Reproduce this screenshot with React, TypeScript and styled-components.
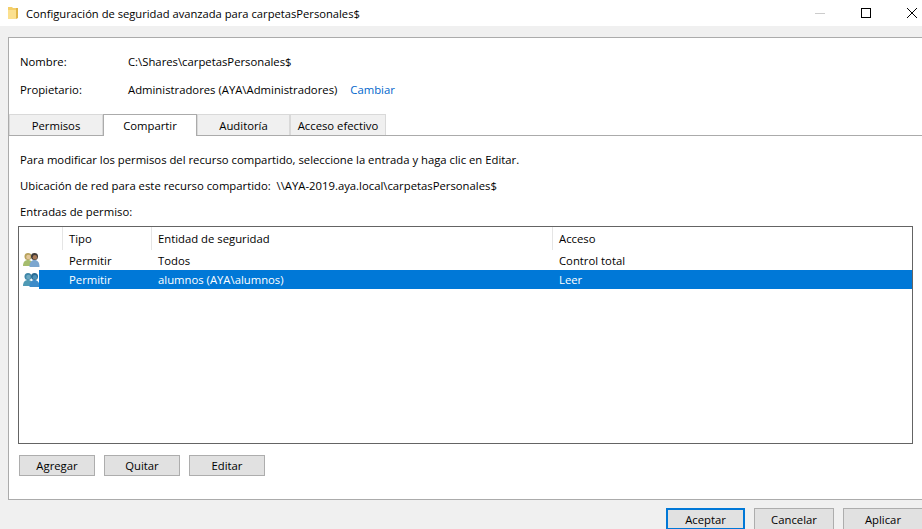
import React from 'react'
import styled, {createGlobalStyle} from 'styled-components'

const GlobalStyle = createGlobalStyle`
  html, body {
    margin: 0;
    padding: 0;
    background: #f0f0f0;
    overflow: hidden;
  }
  body {
    font-family: "Open Sans", "Noto Sans", "Liberation Sans", sans-serif;
    font-size: 11.3px;
    color: #000;
  }
`

const Window = styled.div`
  width: 922px;
  height: 529px;
  display: flex;
  flex-direction: column;
  overflow: hidden;
  background: #f0f0f0;
`

const TitleBar = styled.div`
  height: 26px;
  flex: none;
  display: flex;
  align-items: center;
  background: #fff;
  padding-left: 8px;
  margin-right: -13px;
`

const TitleText = styled.div`
  margin-left: 8px;
  flex: 1;
  font-size: 11.2px;
  white-space: nowrap;
`

const WinControl = styled.div`
  width: 46px;
  height: 26px;
  display: flex;
  align-items: center;
  justify-content: center;
  flex: none;
`

const Panel = styled.div`
  margin: 11px 0 0 8px;
  height: 463px;
  flex: none;
  background: #fff;
  border: 1px solid #ababab;
  border-right: none;
  box-sizing: border-box;
  display: flex;
  flex-direction: column;
`

const InfoBlock = styled.div`
  padding: 9px 0 0 11px;
  height: 76px;
  flex: none;
  box-sizing: border-box;
`

const InfoRow = styled.div`
  height: 28px;
  display: flex;
  align-items: center;
`

const InfoLabel = styled.div`
  width: 108px;
`

const Link = styled.span`
  color: #0066cc;
  margin-left: 13px;
`

const TabStrip = styled.div`
  display: flex;
  height: 22px;
  flex: none;
  border-bottom: 1px solid #ababab;
  box-sizing: border-box;
`

const Tab = styled.div<{$active?: boolean; $w: number}>`
  width: ${p => p.$w}px;
  height: ${p => (p.$active ? 22 : 21)}px;
  box-sizing: border-box;
  display: flex;
  align-items: center;
  justify-content: center;
  background: ${p => (p.$active ? '#fff' : '#f0f0f0')};
  border: 1px solid #d9d9d9;
  border-bottom: none;
  ${p => p.$active && 'border-color: #ababab;'}
`

const Body = styled.div`
  padding: 10px 9px 0 9px;
  flex: 1;
  display: flex;
  flex-direction: column;
`

const Line = styled.div`
  height: 26px;
  display: flex;
  align-items: center;
  margin-left: 2px;
  white-space: pre;
`

const ListBox = styled.div`
  height: 218px;
  border: 1px solid #646464;
  box-sizing: border-box;
  background: #fff;
  margin-top: 2px;
  flex: none;
`

const Row = styled.div<{$h: number}>`
  display: grid;
  grid-template-columns: 44px 89px 401px 1fr;
  height: ${p => p.$h}px;
`

const HeadCell = styled.div`
  border-right: 1px solid #e5e5e5;
  padding-left: 6px;
  display: flex;
  align-items: center;
  &:last-child {
    border-right: none;
  }
`

const IconCell = styled.div`
  padding-left: 4px;
  display: flex;
  align-items: center;
`

const Cell = styled.div<{$selected?: boolean}>`
  padding-left: 6px;
  display: flex;
  align-items: center;
  background: ${p => (p.$selected ? '#0078d7' : 'transparent')};
  color: ${p => (p.$selected ? '#fff' : 'inherit')};
`

const SelectedGap = styled.div`
  position: relative;
  display: flex;
  align-items: center;
  padding-left: 4px;
  &::after {
    content: '';
    position: absolute;
    left: 20px;
    right: 0;
    top: 0;
    bottom: 0;
    background: #0078d7;
  }
`

const ButtonRow = styled.div`
  display: flex;
  gap: 9px;
  margin: 11px 0 0 1px;
`

const Button = styled.div<{$primary?: boolean}>`
  width: ${p => (p.$primary ? 79 : 76)}px;
  height: 21px;
  box-sizing: border-box;
  background: #e1e1e1;
  border: ${p => (p.$primary ? '2px solid #0078d7' : '1px solid #adadad')};
  display: flex;
  align-items: center;
  justify-content: center;
  flex: none;
`

const Footer = styled.div`
  flex: 1;
  display: flex;
  justify-content: flex-end;
  align-items: flex-start;
  gap: 9px;
  padding-top: 8px;
  margin-right: -1px;
`

const FooterButton = styled(Button)`
  width: ${p => (p.$primary ? 79 : 80)}px;
  height: 22px;
`

const FolderIcon = () => (
  <svg width="10" height="14" viewBox="0 0 10 14">
    <path d="M0 1h4l1 1h3v11H0z" fill="#f4cf6a" />
    <path d="M8 2h2v10l-2 1z" fill="#e0b548" />
    <path d="M0 4h8v9H0z" fill="#fbe08f" />
  </svg>
)

const UsersIcon = ({tone}: {tone: 'mixed' | 'blue'}) => {
  const mixed = tone === 'mixed'
  return (
    <svg width="17" height="16" viewBox="0 0 17 16">
      <circle cx="5" cy="4.5" r="3.5" fill={mixed ? '#b7a25c' : '#3f86a8'} />
      <circle cx="5.4" cy="5" r="2.2" fill={mixed ? '#e3c79a' : '#6aa7c2'} />
      <path d="M0 14c0-4 2-6 5-6s5 2 5 6z" fill={mixed ? '#a5bd6e' : '#4f9ab5'} />
      <circle cx="11.5" cy="4.5" r="3.5" fill={mixed ? '#3f3a36' : '#2a6c94'} />
      <circle cx="11.9" cy="5.2" r="2.2" fill={mixed ? '#a87a58' : '#4a90b8'} />
      <path d="M6.5 15c0-5 2-7 5-7s5 2 5 7z" fill={mixed ? '#7ba6cf' : '#3d8bc9'} />
    </svg>
  )
}

export default function App() {
  return (
    <Window>
      <GlobalStyle />
      <TitleBar>
        <FolderIcon />
        <TitleText>Configuración de seguridad avanzada para carpetasPersonales$</TitleText>
        <WinControl>
          <svg width="10" height="10" viewBox="0 0 10 10">
            <path d="M0 5.5h10" stroke="#ccc" strokeWidth="1" />
          </svg>
        </WinControl>
        <WinControl>
          <svg width="10" height="10" viewBox="0 0 10 10">
            <rect x=".5" y=".5" width="9" height="9" fill="none" stroke="#000" />
          </svg>
        </WinControl>
        <WinControl>
          <svg width="10" height="10" viewBox="0 0 10 10">
            <path d="M0 0l10 10M10 0L0 10" stroke="#000" strokeWidth="1" />
          </svg>
        </WinControl>
      </TitleBar>

      <Panel>
        <InfoBlock>
          <InfoRow>
            <InfoLabel>Nombre:</InfoLabel>
            <span>C:\Shares\carpetasPersonales$</span>
          </InfoRow>
          <InfoRow>
            <InfoLabel>Propietario:</InfoLabel>
            <span>Administradores (AYA\Administradores)</span>
            <Link>Cambiar</Link>
          </InfoRow>
        </InfoBlock>

        <TabStrip>
          <Tab $w={94}>Permisos</Tab>
          <Tab $w={94} $active>Compartir</Tab>
          <Tab $w={93}>Auditoría</Tab>
          <Tab $w={96}>Acceso efectivo</Tab>
        </TabStrip>

        <Body>
          <Line>Para modificar los permisos del recurso compartido, seleccione la entrada y haga clic en Editar.</Line>
          <Line>Ubicación de red para este recurso compartido:  \\AYA-2019.aya.local\carpetasPersonales$</Line>
          <Line>Entradas de permiso:</Line>
          <ListBox>
            <Row $h={23}>
              <HeadCell />
              <HeadCell>Tipo</HeadCell>
              <HeadCell>Entidad de seguridad</HeadCell>
              <HeadCell>Acceso</HeadCell>
            </Row>
            <Row $h={20}>
              <IconCell><UsersIcon tone="mixed" /></IconCell>
              <Cell>Permitir</Cell>
              <Cell>Todos</Cell>
              <Cell>Control total</Cell>
            </Row>
            <Row $h={19}>
              <SelectedGap><UsersIcon tone="blue" /></SelectedGap>
              <Cell $selected>Permitir</Cell>
              <Cell $selected>alumnos (AYA\alumnos)</Cell>
              <Cell $selected>Leer</Cell>
            </Row>
          </ListBox>
          <ButtonRow>
            <Button>Agregar</Button>
            <Button>Quitar</Button>
            <Button>Editar</Button>
          </ButtonRow>
        </Body>
      </Panel>

      <Footer>
        <FooterButton $primary>Aceptar</FooterButton>
        <FooterButton>Cancelar</FooterButton>
        <FooterButton>Aplicar</FooterButton>
      </Footer>
    </Window>
  )
}
